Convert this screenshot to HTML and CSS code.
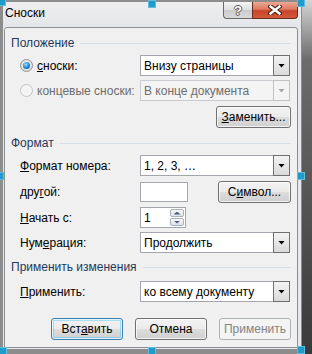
FILE: index.html
```html
<!DOCTYPE html>
<html lang="ru">
<head>
    <meta charset="UTF-8">
    <meta name="viewport" content="width=device-width, initial-scale=1.0">
    <title>Сноски</title>
    <link rel="stylesheet" href="styles.css">
</head>
<body>
    <div class="window">
        <div class="titlebar">
            <span class="title">Сноски</span>
            <div class="caption-buttons">
                <div class="cap-btn help">?</div>
                <div class="cap-btn close">
                    <svg width="14" height="10" viewBox="0 0 14 10">
                        <path d="M2.5 1.5 L11.5 8.5 M11.5 1.5 L2.5 8.5" stroke="#4a2418" stroke-width="4.6" stroke-linecap="square"/>
                        <path d="M2.5 1.5 L11.5 8.5 M11.5 1.5 L2.5 8.5" stroke="#fff" stroke-width="2.4" stroke-linecap="square"/>
                    </svg>
                </div>
            </div>
        </div>

        <div class="client">
            <div class="group-title"><span>Положение</span><span class="rule"></span></div>
            <div class="row first">
                <div class="label"><span class="radio checked"></span><span><u>с</u>носки:</span></div>
                <div class="combo"><span class="combo-text">Внизу страницы</span><span class="combo-btn"></span></div>
            </div>
            <div class="row">
                <div class="label disabled"><span class="radio"></span><span>концевые сноски:</span></div>
                <div class="combo disabled"><span class="combo-text">В конце документа</span><span class="combo-btn"></span></div>
            </div>
            <div class="row right tall">
                <button class="btn wide"><u>З</u>аменить...</button>
            </div>

            <div class="group-title g2"><span>Формат</span><span class="rule"></span></div>
            <div class="row first">
                <div class="label"><span><u>Ф</u>ормат номера:</span></div>
                <div class="combo"><span class="combo-text">1, 2, 3, …</span><span class="combo-btn"></span></div>
            </div>
            <div class="row tall">
                <div class="label"><span>дру<u>г</u>ой:</span></div>
                <div class="textbox"></div>
                <button class="btn symbol">С<u>и</u>мвол...</button>
            </div>
            <div class="row">
                <div class="label"><span><u>Н</u>ачать с:</span></div>
                <div class="spinner">
                    <span class="spin-text">1</span>
                    <span class="spin-btns">
                        <span class="spin-btn up"></span>
                        <span class="spin-btn down"></span>
                    </span>
                </div>
            </div>
            <div class="row">
                <div class="label"><span>Нум<u>е</u>рация:</span></div>
                <div class="combo"><span class="combo-text">Продолжить</span><span class="combo-btn"></span></div>
            </div>

            <div class="group-title g3"><span>Применить изменения</span><span class="rule"></span></div>
            <div class="row first apply">
                <div class="label"><span><u>П</u>рименить:</span></div>
                <div class="combo"><span class="combo-text">ко всему документу</span><span class="combo-btn"></span></div>
            </div>

            <div class="actions">
                <button class="btn default">Вст<u>а</u>вить</button>
                <button class="btn">Отмена</button>
                <button class="btn" disabled>Применить</button>
            </div>
        </div>
    </div>

    <!-- selection handles of the picture -->
    <span class="handle h-tl"></span>
    <span class="handle h-tm"></span>
    <span class="handle h-tr"></span>
    <span class="handle h-ml"></span>
    <span class="handle h-mr"></span>
    <span class="handle h-bl"></span>
    <span class="handle h-bm"></span>
    <span class="handle h-br"></span>
</body>
</html>
```

FILE: styles.css
```css
body {
    margin: 0;
    width: 312px;
    height: 354px;
    overflow: hidden;
    position: relative;
    font-family: "Liberation Sans", Arial, sans-serif;
    font-size: 12px;
    color: #000;
    background: linear-gradient(to bottom, #d6d6d6 0px, #6c6c6c 60px, #3a3a3a 354px);
}
u {
    text-underline-offset: 1px;
}
.window {
    box-sizing: border-box;
    width: 302px;
    height: 354px;
    border-style: solid;
    border-color: #8c8c8c;
    border-width: 2px 1px 5px 3px;
    background: #e6e8eb;
    display: flex;
    flex-direction: column;
}
.titlebar {
    height: 25px;
    flex-shrink: 0;
    display: flex;
    align-items: flex-start;
    background: linear-gradient(to bottom, #eeeeee, #e4e6e9);
}
.title {
    padding: 3px 0 0 2px;
    line-height: 16px;
}
.caption-buttons {
    margin-left: auto;
    margin-right: 3px;
    display: flex;
}
.cap-btn {
    box-sizing: border-box;
    height: 17px;
    display: flex;
    align-items: center;
    justify-content: center;
    border: 1px solid #6a6b6f;
    border-top: none;
}
.help {
    width: 29px;
    border-right: none;
    border-radius: 0 0 0 4px;
    background: linear-gradient(to bottom, #f4f4f4 0%, #dedede 50%, #cbcbcb 51%, #d8d8d8 100%);
    color: #fff;
    font-weight: bold;
    font-size: 13px;
    text-shadow: 1px 0 0 #555, -1px 0 0 #555, 0 1px 0 #555, 0 -1px 0 #555;
}
.close {
    width: 46px;
    border-radius: 0 0 4px 0;
    border-color: #6b2c1e;
    background: linear-gradient(to bottom, #eaa996 0%, #dd7a60 45%, #c8442a 55%, #d25a3b 100%);
}
.client {
    flex: 1;
    margin: 0 3px 1px 1px;
    border: 1px solid #8b8f94;
    border-radius: 3px 3px 0 0;
    background: #f0f0f0;
    padding: 7px 6px 0 6px;
}
.group-title {
    display: flex;
    align-items: center;
    gap: 6px;
    height: 16px;
    color: #1e395b;
}
.group-title .rule {
    flex: 1;
    height: 1px;
    background: #d5dfe5;
}
.g2 {
    margin-top: 7px;
}
.g3 {
    margin-top: 6px;
}
.row {
    display: flex;
    align-items: center;
    height: 21px;
    margin: 4px 0 0 9px;
}
.row.first {
    margin-top: 4px;
}
.row.apply {
    margin-top: 6px;
}
.row.tall {
    height: 22px;
    margin-top: 5px;
}
.row.right {
    justify-content: flex-end;
}
.label {
    width: 120px;
    flex-shrink: 0;
    display: flex;
    align-items: center;
    gap: 4px;
}
.label.disabled {
    color: #6d6d6d;
}
.radio {
    box-sizing: border-box;
    width: 13px;
    height: 13px;
    border-radius: 50%;
    border: 1px solid #8e8f8f;
    background: radial-gradient(circle at 50% 40%, #f6f6f6, #d4d4d4);
    display: flex;
    align-items: center;
    justify-content: center;
}
.radio.checked::after {
    content: "";
    width: 7px;
    height: 7px;
    border-radius: 50%;
    background: radial-gradient(circle at 40% 35%, #a6e6ff 0%, #2a8fdc 45%, #0c4c8c 100%);
}
.label.disabled .radio {
    border-color: #c6c6c6;
    background: #f4f4f4;
}
.combo {
    box-sizing: border-box;
    width: 150px;
    height: 21px;
    display: flex;
    align-items: center;
    border: 1px solid #a3a7ad;
    background: #fff;
}
.combo-text {
    padding-left: 3px;
}
.combo-btn {
    box-sizing: border-box;
    align-self: stretch;
    width: 17px;
    margin: -1px -1px -1px auto;
    border: 1px solid #707070;
    background: linear-gradient(to bottom, #f3f3f3, #dadada);
    display: flex;
    align-items: center;
    justify-content: center;
}
.combo-btn::after {
    content: "";
    width: 7px;
    height: 4px;
    background: #000;
    clip-path: polygon(0 0, 100% 0, 50% 100%);
}
.combo.disabled {
    border-color: #c9cdd2;
    background: #f4f4f4;
    color: #6d6d6d;
}
.combo.disabled .combo-btn {
    border-color: #c2c2c2;
    background: #f4f4f4;
}
.combo.disabled .combo-btn::after {
    background: #a8a8a8;
}
.textbox {
    box-sizing: border-box;
    width: 48px;
    height: 20px;
    border: 1px solid #a3a7ad;
    background: #fff;
}
.spinner {
    box-sizing: border-box;
    width: 46px;
    height: 21px;
    border: 1px solid #a3a7ad;
    background: #fff;
    display: flex;
    align-items: center;
}
.spin-text {
    padding-left: 3px;
}
.spin-btns {
    margin-left: auto;
    margin-right: 1px;
    display: flex;
    flex-direction: column;
    gap: 1px;
}
.spin-btn {
    box-sizing: border-box;
    width: 14px;
    height: 8px;
    border: 1px solid #a9b1bc;
    border-radius: 2px;
    background: linear-gradient(to bottom, #f6f7f9, #dde2e8);
    display: flex;
    align-items: center;
    justify-content: center;
}
.spin-btn::after {
    content: "";
    width: 7px;
    height: 3px;
    background: #4c607f;
}
.spin-btn.up::after {
    clip-path: polygon(50% 0, 100% 100%, 0 100%);
}
.spin-btn.down::after {
    clip-path: polygon(0 0, 100% 0, 50% 100%);
}
.btn {
    box-sizing: border-box;
    width: 72px;
    height: 22px;
    padding: 0;
    font: inherit;
    color: #000;
    border: 1px solid #707070;
    border-radius: 3px;
    background: linear-gradient(to bottom, #f2f2f2 0%, #ebebeb 50%, #dddddd 51%, #cfcfcf 100%);
    box-shadow: inset 0 0 0 1px rgba(255, 255, 255, 0.75);
}
.btn.wide {
    width: 75px;
}
.btn.symbol {
    width: 73px;
    margin-left: auto;
}
.btn.default {
    border-color: #3c7fb1;
    box-shadow: inset 0 0 0 1px rgba(255, 255, 255, 0.7), inset 0 0 0 2px rgba(72, 200, 250, 0.45);
}
.btn:disabled {
    border-color: #adb2b5;
    background: #f4f4f4;
    color: #838383;
    box-shadow: none;
}
.actions {
    display: flex;
    justify-content: flex-end;
    gap: 12px;
    margin-top: 16px;
}
.handle {
    position: absolute;
    width: 6px;
    height: 6px;
    background: #1f9ccc;
    border: 1px solid #5fbde0;
}
.h-tl { left: -2px; top: -2px; }
.h-tm { left: 148px; top: 0; }
.h-tr { left: 297px; top: -1px; }
.h-ml { left: -4px; top: 172px; }
.h-mr { left: 297px; top: 172px; }
.h-bl { left: -1px; top: 347px; }
.h-bm { left: 148px; top: 347px; }
.h-br { left: 297px; top: 346px; }
```
